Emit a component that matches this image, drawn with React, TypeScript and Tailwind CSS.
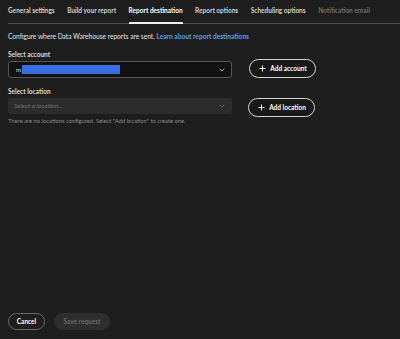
import { ChevronDown, Plus } from "lucide-react";

const tabs = [
  { label: "General settings" },
  { label: "Build your report" },
  { label: "Report destination", active: true },
  { label: "Report options" },
  { label: "Scheduling options" },
  { label: "Notification email", disabled: true },
];

function PillButton({ label }: { label: string }) {
  return (
    <button
      type="button"
      className="flex h-[19px] w-[67px] items-center justify-center gap-[3px] rounded-full border-[1.5px] border-[#d6d6d6] bg-[#191919] text-[6.5px] font-bold text-white"
    >
      <Plus className="h-[9px] w-[9px]" strokeWidth={2.5} />
      {label}
    </button>
  );
}

export default function App() {
  return (
    <div
      className="flex h-[339px] w-[400px] flex-col overflow-hidden bg-[#1e1e1e] text-[6.5px] text-[#e3e3e3]"
      style={{ fontFamily: 'Lato, "Liberation Sans", Arial, sans-serif' }}
    >
      <nav className="ml-2 flex gap-[12.5px] border-b border-[#4e4e4e]">
        {tabs.map((tab) => (
          <div
            key={tab.label}
            className={
              "relative whitespace-nowrap pb-[8px] pt-[7px] font-bold leading-[8px] " +
              (tab.disabled ? "text-[#6e6e6e]" : tab.active ? "text-white" : "text-[#d2d2d2]")
            }
          >
            {tab.label}
            {tab.active && (
              <span className="absolute -bottom-px left-0 right-0 h-[2px] bg-[#f0f0f0]" />
            )}
          </div>
        ))}
      </nav>

      <main className="px-2 pt-[8px]">
        <p className="text-[6.6px] leading-[8px] text-[#e6e6e6]">
          Configure where Data Warehouse reports are sent.{" "}
          <span className="font-bold text-[#5c9ff0]">Learn about report destinations</span>
        </p>

        <div className="mt-[11px] flex items-end gap-[17px]">
          <div className="w-[224px]">
            <div className="mb-[2px] font-bold leading-[8px] text-[#dcdcdc]">Select account</div>
            <div className="flex h-[17px] items-center justify-between rounded-[3px] border border-[#565656] bg-[#121212] pl-[7px] pr-[5px]">
              <div className="flex items-center gap-[1px]">
                <span className="text-[#ddd]">m</span>
                <span className="h-[9px] w-[98px] bg-[#3a6fe2]" />
              </div>
              <ChevronDown className="h-[8px] w-[8px] text-[#cfcfcf]" strokeWidth={2.5} />
            </div>
          </div>
          <div>
            <PillButton label="Add account" />
          </div>
        </div>

        <div className="mt-[10px] flex items-start gap-[16px]">
          <div className="w-[224px]">
            <div className="mb-[2px] font-bold leading-[8px] text-[#dcdcdc]">Select location</div>
            <div className="flex h-[16px] items-center justify-between rounded-[3px] bg-[#2c2c2c] pl-[6px] pr-[6px]">
              <span className="italic text-[#767676]">Select a location...</span>
              <ChevronDown className="h-[8px] w-[8px] text-[#6a6a6a]" strokeWidth={2.5} />
            </div>
            <p className="mt-[3px] text-[5.8px] leading-[8px] text-[#8a8a8a]">
              There are no locations configured. Select "Add location" to create one.
            </p>
          </div>
          <div className="pt-[10px]">
            <PillButton label="Add location" />
          </div>
        </div>
      </main>

      <div className="flex-1" />

      <footer className="flex gap-[9px] px-2 pb-[9px]">
        <button
          type="button"
          className="flex h-[17px] w-[37px] items-center justify-center rounded-full border-[1.5px] border-[#6a6a6a] text-[6.5px] font-bold text-white"
        >
          Cancel
        </button>
        <button
          type="button"
          disabled
          className="flex h-[17px] w-[56px] items-center justify-center rounded-full bg-[#2e2e2e] text-[6.5px] font-bold text-[#686868]"
        >
          Save request
        </button>
      </footer>
    </div>
  );
}
